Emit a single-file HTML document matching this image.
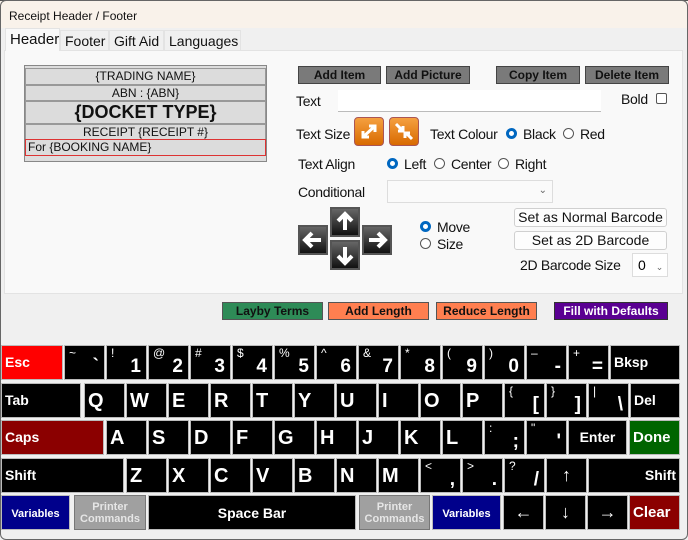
<!DOCTYPE html>
<html><head><style>
*{margin:0;padding:0;box-sizing:border-box}
body{width:688px;height:540px;overflow:hidden;background:#f0f0f0;font-family:"Liberation Sans",Arial,sans-serif;position:relative}
.a{position:absolute}
.title{left:0;top:0;width:688px;height:28px;background:#f9f2ea;font-size:12px;padding:8px 0 0 9px;color:#111;border-top:1px solid #555}
.tab{top:30px;height:21px;font-size:14px;color:#111;background:#f0f0f0;border:1px solid #e3e3e3;padding:2px 0 0 4px}
.panel{left:4px;top:50px;width:679px;height:244px;background:#f9f9f9;border:1px solid #e3e3e3}
.r{background:#dcdcdc;border:1px solid #999;text-align:center;font-size:12px;color:#111;position:absolute;left:25px;width:241px}
.gb{background:#7a7a7a;border:1px solid #444;font-size:12px;font-weight:bold;color:#111;text-align:center;height:18px;line-height:16px}
.lbl{font-size:14px;color:#111;letter-spacing:-0.3px}
.rad{width:11px;height:11px;border-radius:50%;border:1px solid #555;background:#fff}
.rad.on{border:3px solid #0067c0}
.ob{width:30px;height:29px;border-radius:4px;background:linear-gradient(#f5a040,#d86a00);border:1px solid #a55}
.ab{width:30px;height:30px;background:linear-gradient(#666,#111);border:2px solid #555}
.ab svg{display:block}
.wb{background:#fdfdfd;border:1px solid #d0d0d0;border-radius:3px;font-size:14px;text-align:center;color:#111;height:19px;line-height:17px}
.cb{height:18px;font-size:12px;font-weight:bold;text-align:center;line-height:16px;border:1px solid #555;color:#111}
.k{background:#000;color:#fff;font-weight:bold;position:absolute;height:35px;border:1px solid #bbb}
.L{font-size:20px;padding:6px 0 0 3px}
.m{font-size:14px;padding:8px 0 0 3px}
.s{position:absolute;left:4px;top:0;font-size:12px;font-weight:normal}
.b{position:absolute;right:5px;bottom:1px;font-size:19px}
</style></head><body>
<div class="a title">Receipt Header / Footer</div>
<div class="a panel"></div>
<div class="a tab" style="left:5px;top:28px;width:55px;height:23px;background:#f9f9f9;border-bottom:none;font-size:15px">Header</div>
<div class="a tab" style="left:60px;width:49px">Footer</div>
<div class="a tab" style="left:109px;width:55px">Gift Aid</div>
<div class="a tab" style="left:164px;width:77px">Languages</div>

<div class="a" style="left:24px;top:65px;width:243px;height:97px;background:#ddd;border:1px solid #888"></div>
<div class="r" style="top:68px;height:17px">{TRADING NAME}</div>
<div class="r" style="top:85px;height:16px">ABN : {ABN}</div>
<div class="r" style="top:101px;height:23px;font-size:18px;font-weight:bold;line-height:21px">{DOCKET TYPE}</div>
<div class="r" style="top:124px;height:16px">RECEIPT {RECEIPT #}</div>
<div class="r" style="top:139px;height:17px;text-align:left;border-color:#d33;padding-left:2px">For {BOOKING NAME}</div>

<div class="a gb" style="left:298px;top:66px;width:83px">Add Item</div>
<div class="a gb" style="left:386px;top:66px;width:84px">Add Picture</div>
<div class="a gb" style="left:496px;top:66px;width:84px">Copy Item</div>
<div class="a gb" style="left:585px;top:66px;width:84px">Delete Item</div>

<div class="a lbl" style="left:296px;top:93px">Text</div>
<div class="a" style="left:338px;top:90px;width:263px;height:22px;background:#fff;border-bottom:1px solid #bbb"></div>
<div class="a lbl" style="left:621px;top:91px">Bold</div>
<div class="a" style="left:656px;top:93px;width:11px;height:11px;border:1px solid #555;border-radius:2px;background:#fff"></div>

<div class="a lbl" style="left:296px;top:126px">Text Size</div>
<div class="a ob" style="left:354px;top:117px"><svg width="28" height="27"><path d="M8 19L20 8M14 8h6v6M8 13v6h6" stroke="#fff" stroke-width="3" fill="none"/></svg></div>
<div class="a ob" style="left:389px;top:117px"><svg width="28" height="27"><path d="M6 6l6 6M8 13h5v-5M22 21l-6-6M15 20v-5h5" stroke="#fff" stroke-width="3" fill="none"/></svg></div>
<div class="a lbl" style="left:430px;top:126px">Text Colour</div>
<div class="a rad on" style="left:506px;top:128px"></div><div class="a lbl" style="left:523px;top:126px">Black</div>
<div class="a rad" style="left:563px;top:128px"></div><div class="a lbl" style="left:580px;top:126px">Red</div>

<div class="a lbl" style="left:298px;top:156px">Text Align</div>
<div class="a rad on" style="left:387px;top:158px"></div><div class="a lbl" style="left:404px;top:156px">Left</div>
<div class="a rad" style="left:434px;top:158px"></div><div class="a lbl" style="left:451px;top:156px">Center</div>
<div class="a rad" style="left:498px;top:158px"></div><div class="a lbl" style="left:515px;top:156px">Right</div>

<div class="a lbl" style="left:298px;top:184px">Conditional</div>
<div class="a" style="left:387px;top:180px;width:166px;height:23px;background:#fafafa;border:1px solid #ddd;font-size:10px;color:#666;text-align:right;padding:4px 5px 0 0">&#8964;</div>

<div class="a ab" style="left:330px;top:207px"><svg width="26" height="26"><path d="M13 21V6M6 12l7-7 7 7" stroke="#fff" stroke-width="4" fill="none"/></svg></div>
<div class="a ab" style="left:298px;top:225px"><svg width="26" height="26"><path d="M21 13H6M12 6l-7 7 7 7" stroke="#fff" stroke-width="4" fill="none"/></svg></div>
<div class="a ab" style="left:362px;top:225px"><svg width="26" height="26"><path d="M5 13h15M14 6l7 7-7 7" stroke="#fff" stroke-width="4" fill="none"/></svg></div>
<div class="a ab" style="left:330px;top:240px"><svg width="26" height="26"><path d="M13 5v15M6 14l7 7 7-7" stroke="#fff" stroke-width="4" fill="none"/></svg></div>

<div class="a rad on" style="left:420px;top:221px"></div><div class="a lbl" style="left:437px;top:219px">Move</div>
<div class="a rad" style="left:420px;top:238px"></div><div class="a lbl" style="left:437px;top:236px">Size</div>

<div class="a wb" style="left:514px;top:208px;width:153px">Set as Normal Barcode</div>
<div class="a wb" style="left:514px;top:231px;width:153px">Set as 2D Barcode</div>
<div class="a lbl" style="left:520px;top:257px">2D Barcode Size</div>
<div class="a" style="left:632px;top:253px;width:36px;height:24px;background:#fff;border:1px solid #ddd;font-size:14px;padding:3px 0 0 5px">0 <span style="font-size:9px;color:#666;margin-left:6px">&#8964;</span></div>

<div class="a cb" style="left:222px;top:302px;width:101px;background:#2e8b57">Layby Terms</div>
<div class="a cb" style="left:328px;top:302px;width:101px;background:#ff7f50">Add Length</div>
<div class="a cb" style="left:436px;top:302px;width:101px;background:#ff7f50">Reduce Length</div>
<div class="a cb" style="left:554px;top:302px;width:114px;background:#5a0092;color:#fff;border-color:#333">Fill with Defaults</div>

<!-- row 1 -->
<div class="k m" style="left:1px;top:345px;width:62px;background:#f00">Esc</div>
<div class="k" style="left:64px;top:345px;width:41px"><span class="s">~</span><span class="b">`</span></div>
<div class="k" style="left:106px;top:345px;width:41px"><span class="s">!</span><span class="b">1</span></div>
<div class="k" style="left:148px;top:345px;width:41px"><span class="s">@</span><span class="b">2</span></div>
<div class="k" style="left:190px;top:345px;width:41px"><span class="s">#</span><span class="b">3</span></div>
<div class="k" style="left:232px;top:345px;width:41px"><span class="s">$</span><span class="b">4</span></div>
<div class="k" style="left:274px;top:345px;width:41px"><span class="s">%</span><span class="b">5</span></div>
<div class="k" style="left:316px;top:345px;width:41px"><span class="s">^</span><span class="b">6</span></div>
<div class="k" style="left:358px;top:345px;width:41px"><span class="s">&amp;</span><span class="b">7</span></div>
<div class="k" style="left:400px;top:345px;width:41px"><span class="s">*</span><span class="b">8</span></div>
<div class="k" style="left:442px;top:345px;width:41px"><span class="s">(</span><span class="b">9</span></div>
<div class="k" style="left:484px;top:345px;width:41px"><span class="s">)</span><span class="b">0</span></div>
<div class="k" style="left:526px;top:345px;width:41px"><span class="s">&#8211;</span><span class="b">-</span></div>
<div class="k" style="left:568px;top:345px;width:41px"><span class="s">+</span><span class="b">=</span></div>
<div class="k m" style="left:610px;top:345px;width:70px">Bksp</div>
<!-- row 2 -->
<div class="k m" style="left:1px;top:383px;width:80px">Tab</div>
<div class="k L" style="left:84px;top:383px;width:41px">Q</div>
<div class="k L" style="left:126px;top:383px;width:41px">W</div>
<div class="k L" style="left:168px;top:383px;width:41px">E</div>
<div class="k L" style="left:210px;top:383px;width:41px">R</div>
<div class="k L" style="left:252px;top:383px;width:41px">T</div>
<div class="k L" style="left:294px;top:383px;width:41px">Y</div>
<div class="k L" style="left:336px;top:383px;width:41px">U</div>
<div class="k L" style="left:378px;top:383px;width:41px">I</div>
<div class="k L" style="left:420px;top:383px;width:41px">O</div>
<div class="k L" style="left:462px;top:383px;width:41px">P</div>
<div class="k" style="left:504px;top:383px;width:41px"><span class="s">{</span><span class="b">[</span></div>
<div class="k" style="left:546px;top:383px;width:41px"><span class="s">}</span><span class="b">]</span></div>
<div class="k" style="left:588px;top:383px;width:41px"><span class="s">|</span><span class="b">\</span></div>
<div class="k m" style="left:630px;top:383px;width:50px">Del</div>
<!-- row 3 -->
<div class="k m" style="left:1px;top:420px;width:103px;background:#8b0000">Caps</div>
<div class="k L" style="left:106px;top:420px;width:41px">A</div>
<div class="k L" style="left:148px;top:420px;width:41px">S</div>
<div class="k L" style="left:190px;top:420px;width:41px">D</div>
<div class="k L" style="left:232px;top:420px;width:41px">F</div>
<div class="k L" style="left:274px;top:420px;width:41px">G</div>
<div class="k L" style="left:316px;top:420px;width:41px">H</div>
<div class="k L" style="left:358px;top:420px;width:41px">J</div>
<div class="k L" style="left:400px;top:420px;width:41px">K</div>
<div class="k L" style="left:442px;top:420px;width:41px">L</div>
<div class="k" style="left:484px;top:420px;width:41px"><span class="s">:</span><span class="b">;</span></div>
<div class="k" style="left:526px;top:420px;width:41px"><span class="s">"</span><span class="b">'</span></div>
<div class="k m" style="left:568px;top:420px;width:59px;text-align:center;padding-left:0">Enter</div>
<div class="k m" style="left:629px;top:420px;width:51px;background:#006400;font-size:15px">Done</div>
<!-- row 4 -->
<div class="k m" style="left:1px;top:458px;width:123px">Shift</div>
<div class="k L" style="left:126px;top:458px;width:41px">Z</div>
<div class="k L" style="left:168px;top:458px;width:41px">X</div>
<div class="k L" style="left:210px;top:458px;width:41px">C</div>
<div class="k L" style="left:252px;top:458px;width:41px">V</div>
<div class="k L" style="left:294px;top:458px;width:41px">B</div>
<div class="k L" style="left:336px;top:458px;width:41px">N</div>
<div class="k L" style="left:378px;top:458px;width:41px">M</div>
<div class="k" style="left:420px;top:458px;width:41px"><span class="s">&lt;</span><span class="b">,</span></div>
<div class="k" style="left:462px;top:458px;width:41px"><span class="s">&gt;</span><span class="b">.</span></div>
<div class="k" style="left:504px;top:458px;width:41px"><span class="s">?</span><span class="b">/</span></div>
<div class="k" style="left:546px;top:458px;width:41px;text-align:center;font-size:18px;font-weight:normal;padding-top:6px">&#8593;</div>
<div class="k m" style="left:588px;top:458px;width:92px;text-align:right;padding-right:3px">Shift</div>
<!-- row 5 -->
<div class="k" style="left:1px;top:495px;width:69px;background:#00008b;font-size:11px;text-align:center;padding-top:12px">Variables</div>
<div class="k" style="left:74px;top:495px;width:72px;background:#a0a0a0;border-color:#777;color:#e6e6e6;font-size:11px;text-align:center;line-height:12px;padding-top:5px">Printer<br>Commands</div>
<div class="k" style="left:148px;top:495px;width:208px;font-size:14px;text-align:center;padding-top:9px">Space Bar</div>
<div class="k" style="left:359px;top:495px;width:71px;background:#a0a0a0;border-color:#777;color:#e6e6e6;font-size:11px;text-align:center;line-height:12px;padding-top:5px">Printer<br>Commands</div>
<div class="k" style="left:432px;top:495px;width:69px;background:#00008b;font-size:11px;text-align:center;padding-top:12px">Variables</div>
<div class="k" style="left:503px;top:495px;width:41px;text-align:center;font-size:18px;font-weight:normal;padding-top:6px">&#8592;</div>
<div class="k" style="left:545px;top:495px;width:41px;text-align:center;font-size:18px;font-weight:normal;padding-top:6px">&#8595;</div>
<div class="k" style="left:587px;top:495px;width:41px;text-align:center;font-size:18px;font-weight:normal;padding-top:6px">&#8594;</div>
<div class="k m" style="left:629px;top:495px;width:51px;background:#8b0000;font-size:15px;padding-top:8px">Clear</div>
<div class="a" style="left:0;top:0;width:688px;height:540px;border:1px solid #666;border-radius:6px;pointer-events:none"></div>
</body></html>
